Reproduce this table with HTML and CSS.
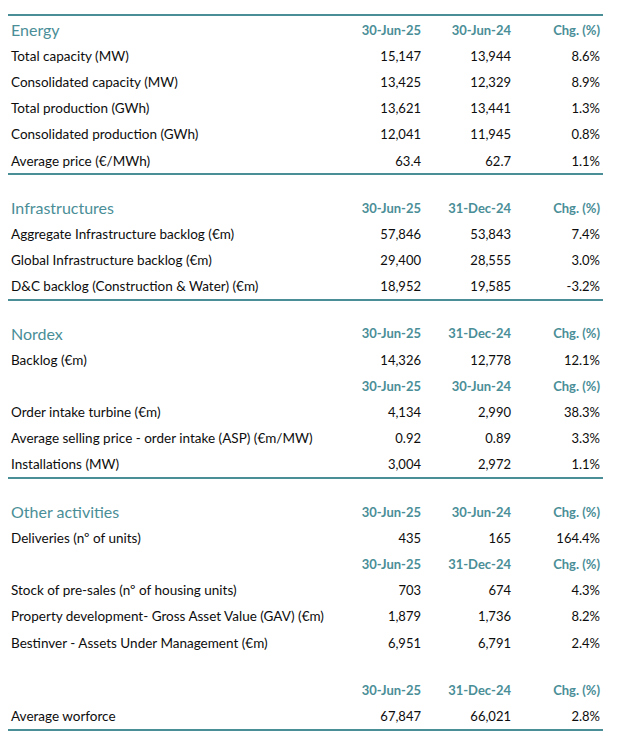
FILE: index.html
```html
<!DOCTYPE html>
<html>
<head>
<meta charset="utf-8">
<link rel="stylesheet" href="styles.css">
</head>
<body>
<div class="report">
  <section class="sec sec-top sec-bottom">
    <div class="row head"><span class="title">Energy</span><span>30-Jun-25</span><span>30-Jun-24</span><span>Chg. (%)</span></div>
    <div class="row"><span>Total capacity (MW)</span><span>15,147</span><span>13,944</span><span>8.6%</span></div>
    <div class="row"><span>Consolidated capacity (MW)</span><span>13,425</span><span>12,329</span><span>8.9%</span></div>
    <div class="row"><span>Total production (GWh)</span><span>13,621</span><span>13,441</span><span>1.3%</span></div>
    <div class="row"><span>Consolidated production (GWh)</span><span>12,041</span><span>11,945</span><span>0.8%</span></div>
    <div class="row"><span>Average price (€/MWh)</span><span>63.4</span><span>62.7</span><span>1.1%</span></div>
  </section>
  <section class="sec sec-bottom">
    <div class="row head"><span class="title">Infrastructures</span><span>30-Jun-25</span><span>31-Dec-24</span><span>Chg. (%)</span></div>
    <div class="row"><span>Aggregate Infrastructure backlog (€m)</span><span>57,846</span><span>53,843</span><span>7.4%</span></div>
    <div class="row"><span>Global Infrastructure backlog (€m)</span><span>29,400</span><span>28,555</span><span>3.0%</span></div>
    <div class="row"><span>D&amp;C backlog (Construction &amp; Water) (€m)</span><span>18,952</span><span>19,585</span><span>-3.2%</span></div>
  </section>
  <section class="sec sec-bottom">
    <div class="row head"><span class="title">Nordex</span><span>30-Jun-25</span><span>31-Dec-24</span><span>Chg. (%)</span></div>
    <div class="row"><span>Backlog (€m)</span><span>14,326</span><span>12,778</span><span>12.1%</span></div>
    <div class="row head"><span></span><span>30-Jun-25</span><span>30-Jun-24</span><span>Chg. (%)</span></div>
    <div class="row"><span>Order intake turbine (€m)</span><span>4,134</span><span>2,990</span><span>38.3%</span></div>
    <div class="row"><span>Average selling price - order intake (ASP) (€m/MW)</span><span>0.92</span><span>0.89</span><span>3.3%</span></div>
    <div class="row"><span>Installations (MW)</span><span>3,004</span><span>2,972</span><span>1.1%</span></div>
  </section>
  <section class="sec sec-open">
    <div class="row head"><span class="title">Other activities</span><span>30-Jun-25</span><span>30-Jun-24</span><span>Chg. (%)</span></div>
    <div class="row"><span>Deliveries (nº of units)</span><span>435</span><span>165</span><span>164.4%</span></div>
    <div class="row head"><span></span><span>30-Jun-25</span><span>31-Dec-24</span><span>Chg. (%)</span></div>
    <div class="row"><span>Stock of pre-sales (nº of housing units)</span><span>703</span><span>674</span><span>4.3%</span></div>
    <div class="row"><span>Property development- Gross Asset Value (GAV) (€m)</span><span>1,879</span><span>1,736</span><span>8.2%</span></div>
    <div class="row"><span>Bestinver - Assets Under Management (€m)</span><span>6,951</span><span>6,791</span><span>2.4%</span></div>
  </section>
  <section class="sec sec-bottom">
    <div class="row head"><span></span><span>30-Jun-25</span><span>31-Dec-24</span><span>Chg. (%)</span></div>
    <div class="row"><span>Average worforce</span><span>67,847</span><span>66,021</span><span>2.8%</span></div>
  </section>
</div>
</body>
</html>
```
FILE: styles.css
```css
html, body {
  margin: 0;
  padding: 0;
  background: #ffffff;
}
body {
  font-family: "Lato", "Liberation Sans", sans-serif;
  color: #0d0d0d;
}
.report {
  width: 595px;
  margin: 14px 0 0 8px;
}
.sec {
  margin-bottom: 19px;
}
.sec-open {
  margin-bottom: 21px;
}
.sec-top {
  border-top: 2px solid #4a8e97;
}
.sec-bottom {
  border-bottom: 2px solid #4a8e97;
}
.row {
  display: grid;
  grid-template-columns: 1fr 90px 90px 89px;
  height: 26.2px;
  align-items: center;
  padding: 1px 3px 0;
  box-sizing: border-box;
  font-size: 13px;
}
.row span {
  text-align: right;
  white-space: nowrap;
}
.row span:first-child {
  text-align: left;
  font-size: 13.5px;
}
.head span {
  color: #4a8e97;
  font-weight: 700;
}
.head span.title {
  font-weight: 400;
  font-size: 16px;
}
```
